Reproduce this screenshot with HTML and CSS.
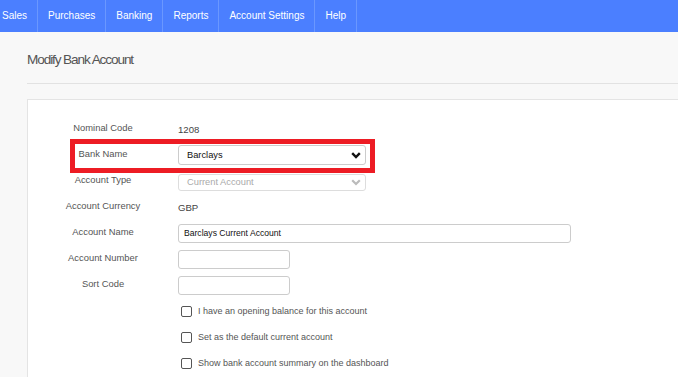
FILE: index.html
```html
<!DOCTYPE html>
<html lang="en">

<head>
    <meta charset="UTF-8">
    <meta name="viewport" content="width=device-width, initial-scale=1.0">
    <title>Modify Bank Account</title>
    <link rel="stylesheet" href="styles.css">
</head>

<body>
    <nav class="top-nav">
        <ul class="nav-list">
            <li class="nav-item">Sales</li>
            <li class="nav-item">Purchases</li>
            <li class="nav-item">Banking</li>
            <li class="nav-item">Reports</li>
            <li class="nav-item">Account Settings</li>
            <li class="nav-item">Help</li>
        </ul>
    </nav>

    <div class="page">
        <h1 class="page-title">Modify Bank Account</h1>
        <hr class="page-rule">

        <div class="panel">
            <form class="account-form">
                <div class="form-row">
                    <span class="form-label">Nominal Code</span>
                    <span class="form-value">1208</span>
                </div>

                <!-- Bank name, highlighted -->
                <div class="form-row highlight-row">
                    <span class="form-label">Bank Name</span>
                    <div class="select">
                        <span>Barclays</span>
                        <svg class="chevron" width="10" height="7" viewBox="0 0 10 7">
                            <path d="M1.2 1.2 L5 5 L8.8 1.2" fill="none" stroke="#111" stroke-width="2.4" />
                        </svg>
                    </div>
                    <div class="highlight-box"></div>
                </div>

                <div class="form-row">
                    <span class="form-label">Account Type</span>
                    <div class="select select-disabled">
                        <span>Current Account</span>
                        <svg class="chevron" width="10" height="7" viewBox="0 0 10 7">
                            <path d="M1.2 1.2 L5 5 L8.8 1.2" fill="none" stroke="#bbb" stroke-width="2.2" />
                        </svg>
                    </div>
                </div>

                <div class="form-row">
                    <span class="form-label">Account Currency</span>
                    <span class="form-value">GBP</span>
                </div>

                <div class="form-row">
                    <span class="form-label">Account Name</span>
                    <input class="text-input input-wide" type="text" value="Barclays Current Account">
                </div>

                <div class="form-row">
                    <span class="form-label">Account Number</span>
                    <input class="text-input input-short" type="text">
                </div>

                <div class="form-row">
                    <span class="form-label">Sort Code</span>
                    <input class="text-input input-short" type="text">
                </div>

                <div class="form-row">
                    <span></span>
                    <label class="check"><span class="check-box"></span>I have an opening balance for this account</label>
                </div>
                <div class="form-row">
                    <span></span>
                    <label class="check"><span class="check-box"></span>Set as the default current account</label>
                </div>
                <div class="form-row">
                    <span></span>
                    <label class="check"><span class="check-box"></span>Show bank account summary on the dashboard</label>
                </div>
            </form>
        </div>
    </div>
</body>

</html>
```

FILE: styles.css
```css
body {
    font-family: "Liberation Sans", Arial, sans-serif;
    margin: 0;
    padding: 0;
    background-color: #f8f8f8;
    overflow: hidden;
}

/* Top navigation */
.top-nav {
    background-color: #4b7fff;
    height: 32px;
}

.nav-list {
    list-style: none;
    margin: 0 0 0 -8px;
    padding: 0;
    display: flex;
}

.nav-item {
    color: #fff;
    font-size: 10px;
    line-height: 32px;
    padding: 0 10px;
    border-right: 1px solid #6a97ff;
}

/* Page */
.page {
    padding-left: 27px;
}

.page-title {
    margin: 20px 0 0;
    font-size: 13.6px;
    font-weight: normal;
    letter-spacing: -1.1px;
    line-height: 16px;
    color: #555;
}

.page-rule {
    margin: 15px 0 15px;
    border: 0;
    border-top: 1px solid #e2e2e2;
}

.panel {
    background-color: #fff;
    border: 1px solid #e4e4e4;
    border-right: 0;
    min-height: 300px;
}

.account-form {
    padding-top: 16px;
}

.form-row {
    display: grid;
    grid-template-columns: 150px 1fr;
    align-items: center;
    height: 26px;
    position: relative;
}

.form-label {
    text-align: center;
    font-size: 9.4px;
    color: #555;
    padding-bottom: 3px;
}

.form-value {
    font-size: 9.6px;
    color: #444;
}

.select {
    width: 188px;
    height: 20px;
    box-sizing: border-box;
    border: 1px solid #ccc;
    border-radius: 3px;
    display: flex;
    align-items: center;
    justify-content: space-between;
    padding: 0 4px 0 8px;
    font-size: 9.3px;
    color: #111;
}

.select-disabled {
    height: 17px;
    border-color: #ddd;
    color: #aaa;
    margin-top: 2px;
}

.text-input {
    height: 19px;
    box-sizing: border-box;
    border: 1px solid #ccc;
    border-radius: 3px;
    padding: 0 5px;
    font-family: inherit;
    font-size: 8.6px;
    color: #111;
    margin: 0;
}

.input-wide {
    width: 393px;
}

.input-short {
    width: 112px;
}

.check {
    display: flex;
    align-items: center;
    gap: 6px;
    padding-left: 3px;
    font-size: 9px;
    color: #555;
}

.check-box {
    width: 11px;
    height: 11px;
    box-sizing: border-box;
    border: 1px solid #555;
    border-radius: 2px;
    background: #fff;
}

/* Red annotation around the bank name row */
.highlight-box {
    position: absolute;
    left: 42px;
    top: -3px;
    width: 305px;
    height: 34px;
    box-sizing: border-box;
    border: 5px solid #ed1c24;
}
```
